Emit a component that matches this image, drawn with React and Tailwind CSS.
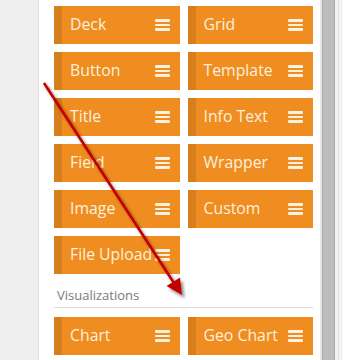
import React from "react";

function Bars() {
  return (
    <div className="flex flex-col gap-[1.7px] w-[15px] shrink-0">
      <div className="h-[2.7px] bg-[#fdf1e0] rounded-[1px]" />
      <div className="h-[2.7px] bg-[#fdf1e0] rounded-[1px]" />
      <div className="h-[2.7px] bg-[#fdf1e0] rounded-[1px]" />
    </div>
  );
}

function Block({ label }) {
  return (
    <div className="flex h-[38px] bg-[#f08d20]">
      <div className="w-[8px] bg-[#d77f1c]" />
      <div className="flex flex-1 items-center justify-between pl-[8px] pr-[10px]">
        <span className="text-[15.8px] text-[#fdf0de] leading-none">{label}</span>
        <Bars />
      </div>
    </div>
  );
}

export default function App() {
  const items = [
    "Deck", "Grid",
    "Button", "Template",
    "Title", "Info Text",
    "Field", "Wrapper",
    "Image", "Custom",
    "File Upload",
  ];
  return (
    <div
      className="relative flex h-[360px] w-[343px] overflow-hidden"
      style={{ fontFamily: '"Open Sans", sans-serif' }}
    >
      <div className="w-[39px] bg-[#efefef] border-r border-[#e2e2e2]" />
      <div className="w-[281px] bg-white pl-[15px] pr-[7px] pt-[6px]">
        <div className="grid grid-cols-2 gap-[8px]">
          {items.map((l) => (
            <Block key={l} label={l} />
          ))}
        </div>
        <div className="mt-[13px] pl-[3px] text-[13px] text-[#7a7a7a] leading-[16px] pb-[4px] border-b border-[#dcdcdc]">
          Visualizations
        </div>
        <div className="grid grid-cols-2 gap-[8px] mt-[9px]">
          <Block label="Chart" />
          <Block label="Geo Chart" />
        </div>
      </div>
      <div className="w-[2px] bg-[#e6e6e6]" />
      <div className="w-[13px] bg-[#bdbdbd] border-x border-[#a9a9a9]" />
      <div className="flex-1 bg-[#f3f3f3] pl-[3px]">
        <div className="h-full w-px bg-[#e0e0e0]" />
      </div>
      <svg
        className="absolute left-0 top-0 pointer-events-none"
        width="343"
        height="360"
      >
        <defs>
          <filter id="sh" x="-50%" y="-50%" width="200%" height="200%">
            <feDropShadow dx="2.5" dy="3" stdDeviation="1.6" floodColor="#000" floodOpacity="0.45" />
          </filter>
        </defs>
        <g filter="url(#sh)">
          <line x1="44" y1="83" x2="174" y2="283" stroke="#c20000" strokeWidth="2.6" />
          <polygon points="182,295 166.5,286 180,277.5" fill="#c20000" />
        </g>
      </svg>
    </div>
  );
}
